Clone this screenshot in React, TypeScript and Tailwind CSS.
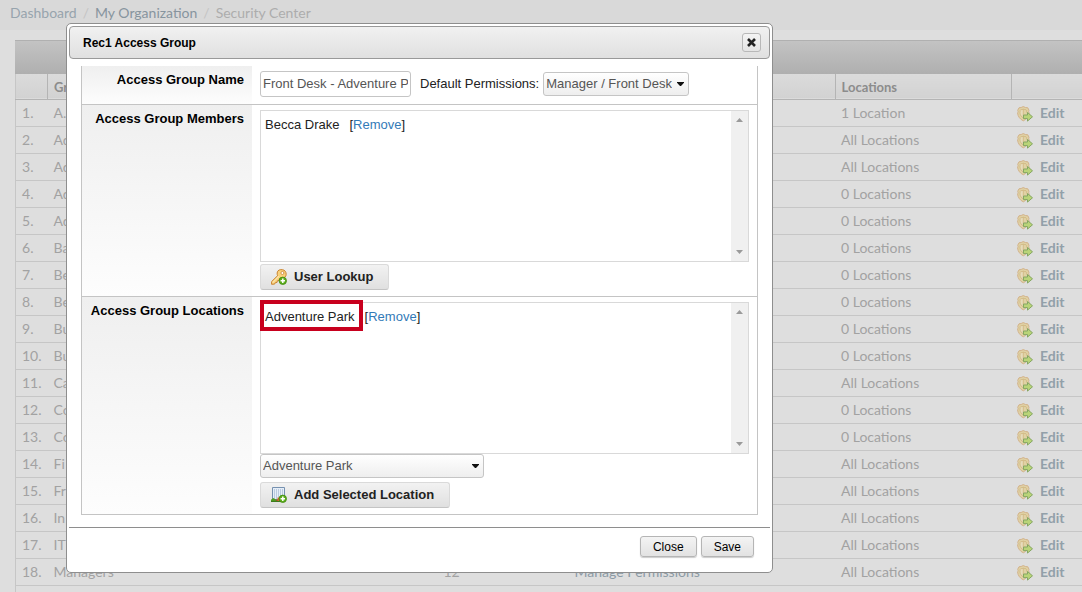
import React from "react";

type Row = { name: string; members?: string; permissions?: string; locations: string };

const rows: Row[] = [
  { name: "A.", locations: "1 Location" },
  { name: "Ad", locations: "All Locations" },
  { name: "Ad", locations: "All Locations" },
  { name: "Ad", locations: "0 Locations" },
  { name: "Ad", locations: "0 Locations" },
  { name: "Ba", locations: "0 Locations" },
  { name: "Be", locations: "0 Locations" },
  { name: "Be", locations: "0 Locations" },
  { name: "Bu", locations: "0 Locations" },
  { name: "Bu", locations: "0 Locations" },
  { name: "Ca", locations: "All Locations" },
  { name: "Co", locations: "0 Locations" },
  { name: "Co", locations: "0 Locations" },
  { name: "Fi", locations: "All Locations" },
  { name: "Fr", locations: "All Locations" },
  { name: "In", locations: "All Locations" },
  { name: "IT", locations: "All Locations" },
  { name: "Managers", members: "12", permissions: "Manage Permissions", locations: "All Locations" },
];

function ShieldIcon() {
  return (
    <svg width="16" height="16" viewBox="0 0 16 16" className="mt-0.5 shrink-0" aria-hidden="true">
      <path d="M6.200.6 8.500 1.500 10.800 1.800 12 4.300C11.500 5.200 11.700 6 12.200 7c-.4 3.500-2.700 6.300-5.900 7.800C3.100 13.300.9 10.500.6 7c.6-1 .7-1.800.1-2.700L2 1.800l2.200-.3z" fill="#e0d2a5" stroke="#d2b28a" />
      <path d="M6.300 3.200v8.800C4.300 10.800 3.200 9 2.900 6.900c.3-.8.3-1.400.1-2.200l.7-1 1.300-.1z" fill="#e6dcbc" stroke="#cfb57f" strokeWidth=".8" />
      <path d="M6.300 3.200l1.500.4 1.200.1.700 1c-.2.800-.2 1.300.1 2" fill="none" stroke="#cfb57f" strokeWidth=".8" />
      <path d="M6.500 9h4V6.500l5 4.300-5 4.300v-2.500h-4z" fill="#b9d478" stroke="#85a663" />
    </svg>
  );
}

function PlusBadge() {
  return (
    <g>
      <circle cx="11.800" cy="11.800" r="3.700" fill="#5fae1e" stroke="#3d8a0c" strokeWidth=".8" />
      <path d="M11.800 9.600v4.400M9.600 11.800H14" stroke="#fff" strokeWidth="1.500" />
    </g>
  );
}

function KeyIcon() {
  return (
    <svg width="16" height="16" viewBox="0 0 16 16" className="shrink-0" aria-hidden="true">
      <path d="M7 1.800C8.300.5 11 .2 13 1.200s2.600 3.600 1.900 5.600c-.8 2-3.300 2.800-5.400 2l-1.200 1.300-.3 1.500-1.700.2-.3 1.700-1.600.1-.8 1.500-3 .2V12.600L6.600 6.700C5.900 5 6 3 7 1.800z" fill="#f9d17c" stroke="#c98331" />
      <path d="M1.600 13.700 8 7.200" stroke="#fbe7ae" strokeWidth="1.100" />
      <circle cx="11.400" cy="4" r="1.500" fill="#fff" stroke="#c98331" strokeWidth=".8" />
      <PlusBadge />
    </svg>
  );
}

function BuildingIcon() {
  return (
    <svg width="16" height="16" viewBox="0 0 16 16" className="shrink-0" aria-hidden="true">
      <path d="M1.500.5h12v12h-12z" fill="#e6eef8" stroke="#7691b0" />
      <path d="M3 3h9M3 5h9M3 7h9M3 9h9M3 11h9" stroke="#8fa8c6" strokeDasharray="1 1" />
      <path d="M0 14.500v-1.700L2.200 11 5 12.500v2z" fill="#4f9b22" />
      <path d="M5 12.500h2v2H5z" fill="#8a5a2b" />
      <path d="M6.500 10.500H9v4H6.500z" fill="#d2692b" />
      <path d="M0 14.500h11" stroke="#3f7a1d" />
      <PlusBadge />
    </svg>
  );
}

function ListPanel({ children }: { children: React.ReactNode }) {
  return (
    <div className="flex h-[152px] border border-[#d9d9d9]">
      <div className="flex-1 px-1 py-[5px] leading-[18px]">{children}</div>
      <div className="flex w-[17px] flex-col items-center justify-between bg-[#f0f0f0] py-1.5">
        <svg width="7" height="4" viewBox="0 0 7 4" className="mt-px" aria-hidden="true">
          <path d="M0 4 3.500 0 7 4z" fill="#9a9a9a" />
        </svg>
        <svg width="7" height="4" viewBox="0 0 7 4" className="mb-px" aria-hidden="true">
          <path d="M0 0h7L3.500 4z" fill="#9a9a9a" />
        </svg>
      </div>
    </div>
  );
}

function SelectBox({ id, label, value, width }: { id: string; label?: string; value: string; width: string }) {
  return (
    <span className={"relative inline-flex " + width}>
      <select
        id={id}
        aria-label={label}
        className="h-6 w-full appearance-none rounded-[3px] border border-[#c5c5c5] bg-linear-to-b from-white to-[#eeeeee] pr-4 pl-0.5 text-[13px] text-[#555555]"
      >
        <option>{value}</option>
      </select>
      <svg width="7" height="4" viewBox="0 0 7 4" className="pointer-events-none absolute top-2.5 right-[5px]" aria-hidden="true">
        <path d="M0 0h7v.7L4 4H3L0 .7z" fill="#111" />
      </svg>
    </span>
  );
}

function IconButton({ icon, children }: { icon: React.ReactNode; children: React.ReactNode }) {
  return (
    <button
      type="button"
      className="flex h-[26px] items-center gap-[7px] rounded-[3px] border border-[#dadada] border-b-[#c4c4c4] bg-linear-to-b from-[#f2f2f2] to-[#e0e0e0] pr-[15px] pb-px pl-2.5 text-[13px] font-bold text-[#222222]"
    >
      {icon}
      {children}
    </button>
  );
}

function FormRow({ label, htmlFor, children }: { label: string; htmlFor?: string; children: React.ReactNode }) {
  return (
    <div className="flex border-b border-[#c4c4c4]">
      <div className="w-[170px] shrink-0 bg-linear-to-b from-[#efefef] to-[#fdfdfd] px-2 pt-[5px] text-right text-[13px] leading-[18px] font-bold text-black">
        {htmlFor ? <label htmlFor={htmlFor}>{label}</label> : label}
      </div>
      <div className="min-w-0 flex-1 px-2">{children}</div>
    </div>
  );
}

function AccessGroupDialog() {
  const footerButton =
    "h-[21px] rounded-[3px] border border-[#b5b5b5] bg-linear-to-b from-[#f4f4f4] to-[#e2e2e2] px-3 text-[12px] text-black shadow-[0_1px_1px_rgba(0,0,0,0.2)]";
  return (
    <div
      role="dialog"
      aria-labelledby="dialog-title"
      className="absolute top-[23px] left-[66px] w-[707px] rounded-[5px] border border-[#8e8e8e] bg-white p-0.5 font-['Liberation_Sans',Arial,sans-serif] text-[13px] text-[#222222]"
    >
      <div className="flex h-[33px] items-center justify-between rounded-[4px] border border-[#999999] bg-linear-to-b from-[#f1f1f1] to-[#e0e0e0] pr-2 pl-[13px]">
        <h2 id="dialog-title" className="text-[12px] font-bold text-black">
          Rec1 Access Group
        </h2>
        <button
          type="button"
          aria-label="Close dialog"
          className="flex size-[19px] items-center justify-center rounded-[3px] border border-[#b8b8b8] bg-linear-to-b from-[#f4f4f4] to-[#e4e4e4]"
        >
          <svg width="9" height="9" viewBox="0 0 9 9" aria-hidden="true">
            <path d="M1 1l7 7M8 1 1 8" stroke="#222" strokeWidth="2.600" />
          </svg>
        </button>
      </div>

      <div className="mx-3 mt-[7px] border-x border-[#c4c4c4]">
        <FormRow label="Access Group Name" htmlFor="group-name">
          <div className="flex h-[38px] items-center pb-[3px]">
            <input
              id="group-name"
              defaultValue="Front Desk - Adventure Park"
              className="h-[26px] w-[151px] rounded-[3px] border border-[#c5c5c5] px-0.5 text-[13px] text-[#555555]"
            />
            <label htmlFor="permissions" className="mr-1 ml-[9px]">
              Default Permissions:
            </label>
            <SelectBox id="permissions" value="Manager / Front Desk" width="w-[146px]" />
          </div>
        </FormRow>
        <FormRow label="Access Group Members">
          <div className="pt-[5px] pb-1.5">
            <ListPanel>
              Becca Drake
              <span className="ml-2.5">
                [<a href="#remove-member" className="text-[#337ab7]">Remove</a>]
              </span>
            </ListPanel>
            <div className="mt-0.5">
              <IconButton icon={<KeyIcon />}>User Lookup</IconButton>
            </div>
          </div>
        </FormRow>
        <FormRow label="Access Group Locations">
          <div className="pt-[5px] pb-1.5">
            <ListPanel>
              <span className="relative">
                Adventure Park
                <span className="pointer-events-none absolute -top-[9px] -right-2 -bottom-[7px] -left-[5px] border-4 border-[#c8001e]" />
              </span>
              <span className="ml-2.5">
                [<a href="#remove-location" className="text-[#337ab7]">Remove</a>]
              </span>
            </ListPanel>
            <div className="flex flex-col items-start gap-1">
              <SelectBox id="location" label="Location" value="Adventure Park" width="w-[224px]" />
              <IconButton icon={<BuildingIcon />}>Add Selected Location</IconButton>
            </div>
          </div>
        </FormRow>
      </div>

      <div className="mt-3 flex justify-end gap-1 border-t border-[#8e8e8e] pt-2 pr-4 pb-[13px]">
        <button type="button" className={footerButton}>
          Close
        </button>
        <button type="button" className={footerButton}>
          Save
        </button>
      </div>
    </div>
  );
}

export default function App() {
  return (
    <div className="relative h-screen overflow-hidden bg-[#dedede] font-[Lato,sans-serif] text-[14px] text-[#a2a2a2]">
      <nav className="flex h-[30px] items-center gap-1.5 bg-[#d9d9d9] px-2.5 pb-1.5">
        <a href="#dashboard" className="text-[#97a4ad]">Dashboard</a>
        <span className="text-[#c4c4c4]">/</span>
        <a href="#organization" className="text-[#87949e]">My Organization</a>
        <span className="text-[#c4c4c4]">/</span>
        <span className="text-[#adadad]">Security Center</span>
      </nav>

      <main className="pt-2.5 pl-[15px]">
        <div className="h-[34px] border-t border-[#b0b0b0] bg-linear-to-b from-[#c3c3c3] to-[#afafaf]" />
        <table className="w-full table-fixed border-collapse border-l border-[#c6c6c6]">
          <thead>
            <tr className="h-[25px] border-b border-[#b4b4b4] bg-linear-to-b from-[#dbdbdb] to-[#d2d2d2] text-left text-[13px] text-[#8c8c8c]">
              <th className="w-8 border-r border-[#b4b4b4]" />
              <th className="w-[390px] border-r border-[#b4b4b4] pt-0.5 pl-1.5">Group</th>
              <th className="w-[131px] border-r border-[#b4b4b4]" />
              <th className="border-r border-[#b4b4b4]" />
              <th className="w-[176px] border-r border-[#b4b4b4] pt-0.5 pl-1.5">Locations</th>
              <th className="w-[71px]" />
            </tr>
          </thead>
          <tbody>
            {rows.map((row, index) => (
              <tr key={index} className="h-[27px] border-b border-[#c6c6c6]">
                <td className="pl-1.5">{index + 1}.</td>
                <td className="pl-1.5">{row.name}</td>
                <td className="pl-1.5">{row.members}</td>
                <td className="pl-1.5">
                  {row.permissions && (
                    <a href="#manage" className="text-[#8b9aa5]">{row.permissions}</a>
                  )}
                </td>
                <td className="pl-1.5">{row.locations}</td>
                <td className="pl-1.5">
                  <a href="#edit" className="flex items-center gap-[7px] font-bold text-[#92a0a9]">
                    <ShieldIcon />
                    Edit
                  </a>
                </td>
              </tr>
            ))}
            <tr className="h-[27px]">
              <td colSpan={6} />
            </tr>
          </tbody>
        </table>
      </main>

      <AccessGroupDialog />
    </div>
  );
}
